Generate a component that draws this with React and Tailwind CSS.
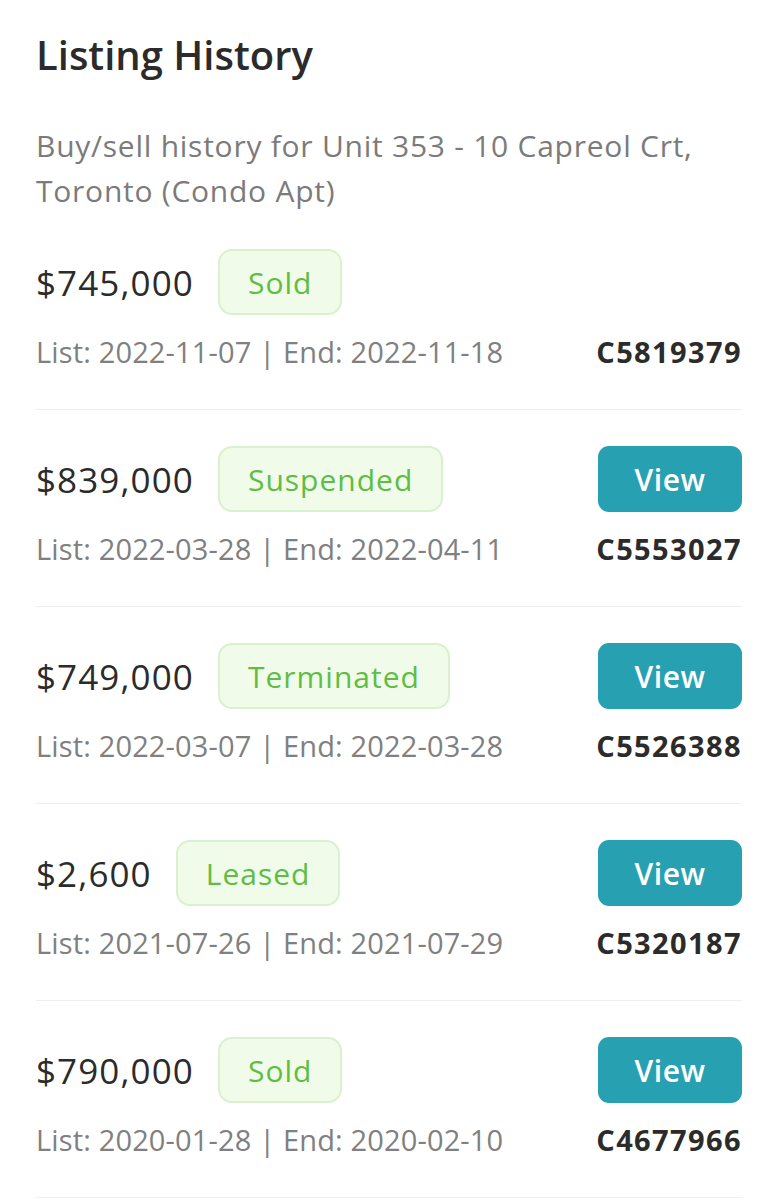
import React from "react";

const listings = [
  { price: "$745,000", status: "Sold", list: "2022-11-07", end: "2022-11-18", mls: "C5819379", view: false },
  { price: "$839,000", status: "Suspended", list: "2022-03-28", end: "2022-04-11", mls: "C5553027", view: true },
  { price: "$749,000", status: "Terminated", list: "2022-03-07", end: "2022-03-28", mls: "C5526388", view: true },
  { price: "$2,600", status: "Leased", list: "2021-07-26", end: "2021-07-29", mls: "C5320187", view: true },
  { price: "$790,000", status: "Sold", list: "2020-01-28", end: "2020-02-10", mls: "C4677966", view: true },
];

const HistoryRow = ({ item }) => (
  <div className="flex justify-between border-b border-[#efefef] pt-[36px] pb-[37px]">
    <div className="flex flex-col">
      <div className="flex h-[66px] items-center gap-[24px]">
        <span className="text-[35px] leading-none tracking-[1.1px] text-[#2b2b2b]">{item.price}</span>
        <span className="flex h-[66px] items-center rounded-[14px] border-2 border-[#d9f1cc] bg-[#f1fbea] px-[28px] text-[30px] font-medium tracking-[1px] text-[#5fbd45]">
          {item.status}
        </span>
      </div>
      <div className="mt-[17px] text-[29px] leading-[40px] tracking-[0.15px] text-[#808080]">
        List: {item.list} | End: {item.end}
      </div>
    </div>
    <div className="flex flex-col items-end">
      {item.view ? (
        <button className="h-[66px] w-[144px] rounded-[11px] bg-[#27a1b2] text-[30px] font-semibold tracking-[0.5px] text-white">
          View
        </button>
      ) : (
        <div className="h-[66px]" />
      )}
      <div className="mt-[17px] text-[29px] font-bold leading-[40px] tracking-[1.4px] text-[#2b2b2b]">{item.mls}</div>
    </div>
  </div>
);

export default function App() {
  return (
    <div className="min-h-screen bg-white px-[36px] pt-[31px] font-['Open_Sans',sans-serif]">
      <h1 className="text-[40px] font-semibold leading-[48px] text-[#2b2b2b]">Listing History</h1>
      <p className="mt-[44px] text-[30px] leading-[45px] tracking-[0.75px] text-[#7b7b7b]">
        Buy/sell history for Unit 353 - 10 Capreol Crt,
        <br />
        Toronto (Condo Apt)
      </p>
      <div>
        {listings.map((item) => (
          <HistoryRow key={item.mls} item={item} />
        ))}
      </div>
    </div>
  );
}
